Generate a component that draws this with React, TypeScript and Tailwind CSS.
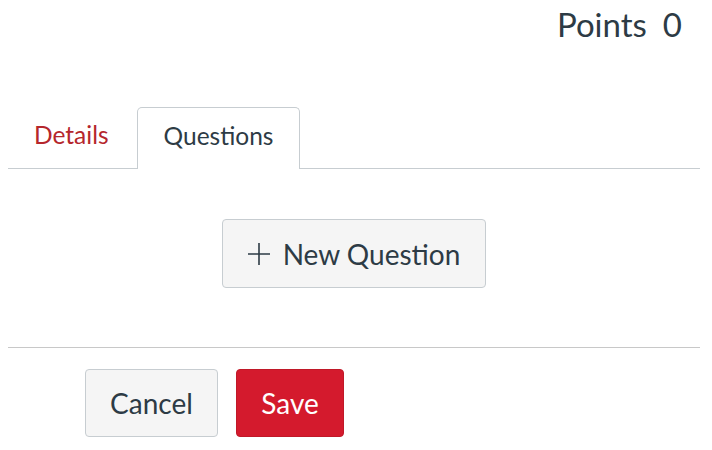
const App = () => {
  return (
    <div className="w-[712px] h-[450px] bg-white pl-2 pr-3 text-[#2d3b45]" style={{ fontFamily: "Lato, 'Liberation Sans', sans-serif" }}>
      <div className="flex justify-end pt-[4px] pr-[18px]">
        <div className="text-[33px] leading-[40px] flex gap-[16px]">
          <span>Points</span>
          <span>0</span>
        </div>
      </div>

      <div className="mt-[62px] flex items-end border-b border-[#c7cdd1]">
        <div className="h-[62px] px-[26px] pb-[3px] flex items-center text-[24.5px] text-[#b5262c]">Details</div>
        <div className="ml-[2px] h-[62px] px-[26px] pb-[4px] flex items-center text-[24.5px] bg-white border border-b-0 border-[#c7cdd1] rounded-t-[5px] -mb-px">
          Questions
        </div>
      </div>

      <div className="flex justify-center pt-[50px] pb-[59px] border-b border-[#c8c8c8]">
        <button className="h-[69px] w-[264px] flex items-center justify-center gap-[13px] bg-[#f5f5f5] border border-[#c7cdd1] rounded-[4px] text-[28px]">
          <svg width="22" height="22" viewBox="0 0 22 22" fill="none" stroke="#2d3b45" strokeWidth="1.6">
            <path d="M11 0v22M0 11h22" />
          </svg>
          <span>New Question</span>
        </button>
      </div>

      <div className="flex gap-[18px] pl-[77px] pt-[21px]">
        <button className="h-[68px] w-[133px] bg-[#f5f5f5] border border-[#c7cdd1] rounded-[4px] text-[28px]">Cancel</button>
        <button className="h-[68px] w-[108px] bg-[#d41a2d] border border-[#c01828] rounded-[4px] text-[28px] text-white">Save</button>
      </div>
    </div>
  );
};

export default App;
